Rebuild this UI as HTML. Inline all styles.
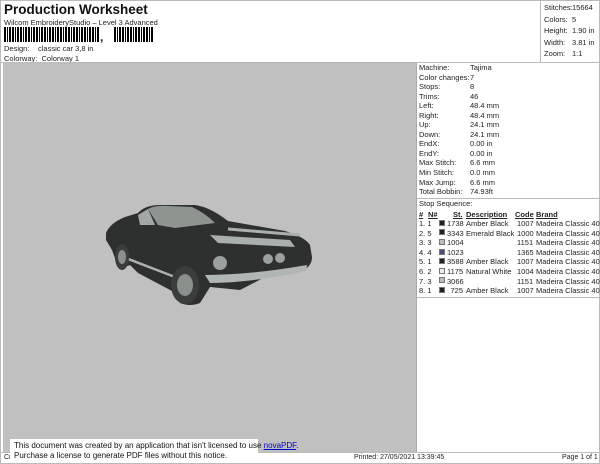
<!DOCTYPE html><html><head><style>
*{margin:0;padding:0;box-sizing:border-box}
body{width:600px;height:464px;background:#fff;font-family:"Liberation Sans",sans-serif;font-size:7.5px;color:#222;position:relative;overflow:hidden}
.a{position:absolute;white-space:nowrap}
.bc{position:absolute;top:27px;height:15px;background:repeating-linear-gradient(90deg,#000 0 2px,#fff 2px 3px,#000 3px 4px,#fff 4px 5px,#000 5px 7px,#fff 7px 8px)}
.r{position:absolute;left:419px;white-space:nowrap}
.sq{position:absolute;left:439px;width:6px;height:6px;border:1px solid #777}
</style></head><body>
<div class="a" style="left:0;top:0;width:600px;height:464px;border:1px solid #bbb"></div>
<div class="a" style="left:4px;top:2px;font-size:13.5px;font-weight:bold;color:#111">Production Worksheet</div>
<div class="a" style="left:4px;top:18px">Wilcom EmbroideryStudio – Level 3 Advanced</div>
<div class="bc" style="left:4px;width:96px"></div>
<div class="a" style="left:100px;top:30px;font-size:12px;font-weight:bold">,</div>
<div class="bc" style="left:114px;width:40px"></div>
<div class="a" style="left:4px;top:44px">Design:</div><div class="a" style="left:38px;top:44px">classic car 3,8 in</div>
<div class="a" style="left:4px;top:54px">Colorway:&nbsp; Colorway 1</div>
<div class="a" style="left:540px;top:0;width:1px;height:62px;background:#bbb"></div>
<div class="a" style="left:544px;top:2px;line-height:11.5px">Stitches:<br>Colors:<br>Height:<br>Width:<br>Zoom:</div>
<div class="a" style="left:572px;top:2px;line-height:11.5px">15664<br>5<br>1.90 in<br>3.81 in<br>1:1</div>
<div class="a" style="left:0;top:62px;width:600px;height:1px;background:#bbb"></div>
<div class="a" style="left:3px;top:63px;width:413px;height:389px;background:#c0c0c0"></div>
<div class="a" style="left:416px;top:63px;width:1px;height:389px;background:#aaa"></div>
<svg class="a" style="left:100px;top:195px" width="230" height="115" viewBox="0 0 230 115">
<path d="M6 38 Q10 28 25 22 L38 18 Q45 10 60 10 L95 10 Q110 12 128 26 L185 36 Q205 42 210 50 L212 62 Q212 70 205 74 L165 82 Q150 90 140 95 L110 92 L100 108 Q90 112 80 108 L72 96 L38 78 L30 70 Q22 74 16 66 L12 55 L6 45 Z" fill="#2e302f"/>
<path d="M48 14 Q55 10 68 11 L92 12 Q105 18 115 28 L75 33 L58 30 Z" fill="#8e9591"/>
<path d="M38 20 L48 14 L55 30 L40 30 Z" fill="#a2a8a5"/>
<path d="M110 40 L190 45 L195 52 L118 48 Z" fill="#a9afac"/>
<path d="M128 34 L200 40" stroke="#a9afac" stroke-width="3" fill="none"/>
<path d="M18 60 L75 82" stroke="#aab0ad" stroke-width="2.5" fill="none"/>
<path d="M105 80 Q150 80 207 70 L206 76 Q150 88 110 88 Z" fill="#b0b6b3"/>
<circle cx="120" cy="68" r="7" fill="#9aa09d"/><circle cx="168" cy="64" r="5" fill="#9aa09d"/><circle cx="180" cy="63" r="5" fill="#9aa09d"/>
<ellipse cx="85" cy="90" rx="14" ry="19" fill="#3a3d3c"/><ellipse cx="85" cy="90" rx="8" ry="11" fill="#8a908c"/>
<ellipse cx="22" cy="62" rx="7" ry="13" fill="#3a3d3c"/><ellipse cx="22" cy="62" rx="4" ry="7" fill="#8a908c"/>
</svg>
<div class="r" style="top:63px;line-height:9.55px">Machine:<br>Color changes:<br>Stops:<br>Trims:<br>Left:<br>Right:<br>Up:<br>Down:<br>EndX:<br>EndY:<br>Max Stitch:<br>Min Stitch:<br>Max Jump:<br>Total Bobbin:</div>
<div class="r" style="top:63px;left:470px;line-height:9.55px">Tajima<br>7<br>8<br>46<br>48.4 mm<br>48.4 mm<br>24.1 mm<br>24.1 mm<br>0.00 in<br>0.00 in<br>6.6 mm<br>0.0 mm<br>6.6 mm<br>74.93ft</div>
<div class="a" style="left:417px;top:198px;width:182px;height:1px;background:#bbb"></div>
<div class="r" style="top:199px">Stop Sequence:</div>
<div class="r" style="top:210px;font-weight:bold;text-decoration:underline">#</div>
<div class="a" style="left:428px;top:210px;font-weight:bold;text-decoration:underline">N#</div>
<div class="a" style="left:453px;top:210px;font-weight:bold;text-decoration:underline">St.</div>
<div class="a" style="left:466px;top:210px;font-weight:bold;text-decoration:underline">Description</div>
<div class="a" style="left:515px;top:210px;font-weight:bold;text-decoration:underline">Code</div>
<div class="a" style="left:536px;top:210px;font-weight:bold;text-decoration:underline">Brand</div>
<div class="r" style="top:219px;line-height:9.6px">1. 1<br>2. 5<br>3. 3<br>4. 4<br>5. 1<br>6. 2<br>7. 3<br>8. 1</div>
<div class="a" style="left:447px;top:219px;line-height:9.6px;text-align:right;width:16px">1738<br>3343<br>1004<br>1023<br>3588<br>1175<br>3066<br>725</div>
<div class="a" style="left:466px;top:219px;line-height:9.6px">Amber Black<br>Emerald Black<br>&nbsp;<br>&nbsp;<br>Amber Black<br>Natural White<br>&nbsp;<br>Amber Black</div>
<div class="a" style="left:517px;top:219px;line-height:9.6px">1007<br>1000<br>1151<br>1365<br>1007<br>1004<br>1151<br>1007</div>
<div class="a" style="left:536px;top:219px;line-height:9.6px">Madeira Classic 40<br>Madeira Classic 40<br>Madeira Classic 40<br>Madeira Classic 40<br>Madeira Classic 40<br>Madeira Classic 40<br>Madeira Classic 40<br>Madeira Classic 40</div>
<div class="sq" style="top:220px;background:#222"></div>
<div class="sq" style="top:229px;background:#222"></div>
<div class="sq" style="top:239px;background:#b8bcc4"></div>
<div class="sq" style="top:249px;background:#45507a"></div>
<div class="sq" style="top:258px;background:#222"></div>
<div class="sq" style="top:268px;background:#eee"></div>
<div class="sq" style="top:277px;background:#b8bcc4"></div>
<div class="sq" style="top:287px;background:#222"></div>
<div class="a" style="left:417px;top:297px;width:182px;height:1px;background:#bbb"></div>
<div class="a" style="left:0;top:452px;width:600px;height:1px;background:#bbb"></div>
<div class="a" style="left:4px;top:454px;font-size:7px">Cr</div>
<div class="a" style="left:354px;top:454px;font-size:7px">Printed: 27/05/2021 13:39:45</div>
<div class="a" style="left:562px;top:454px;font-size:7px">Page 1 of 1</div>
<div class="a" style="left:10px;top:439px;width:248px;height:22px;background:#fff;padding:2px 4px;line-height:10px;font-size:8px;color:#111">This document was created by an application that isn't licensed to use <span style="color:#00c;text-decoration:underline">novaPDF</span>.<br>Purchase a license to generate PDF files without this notice.</div>
</body></html>
